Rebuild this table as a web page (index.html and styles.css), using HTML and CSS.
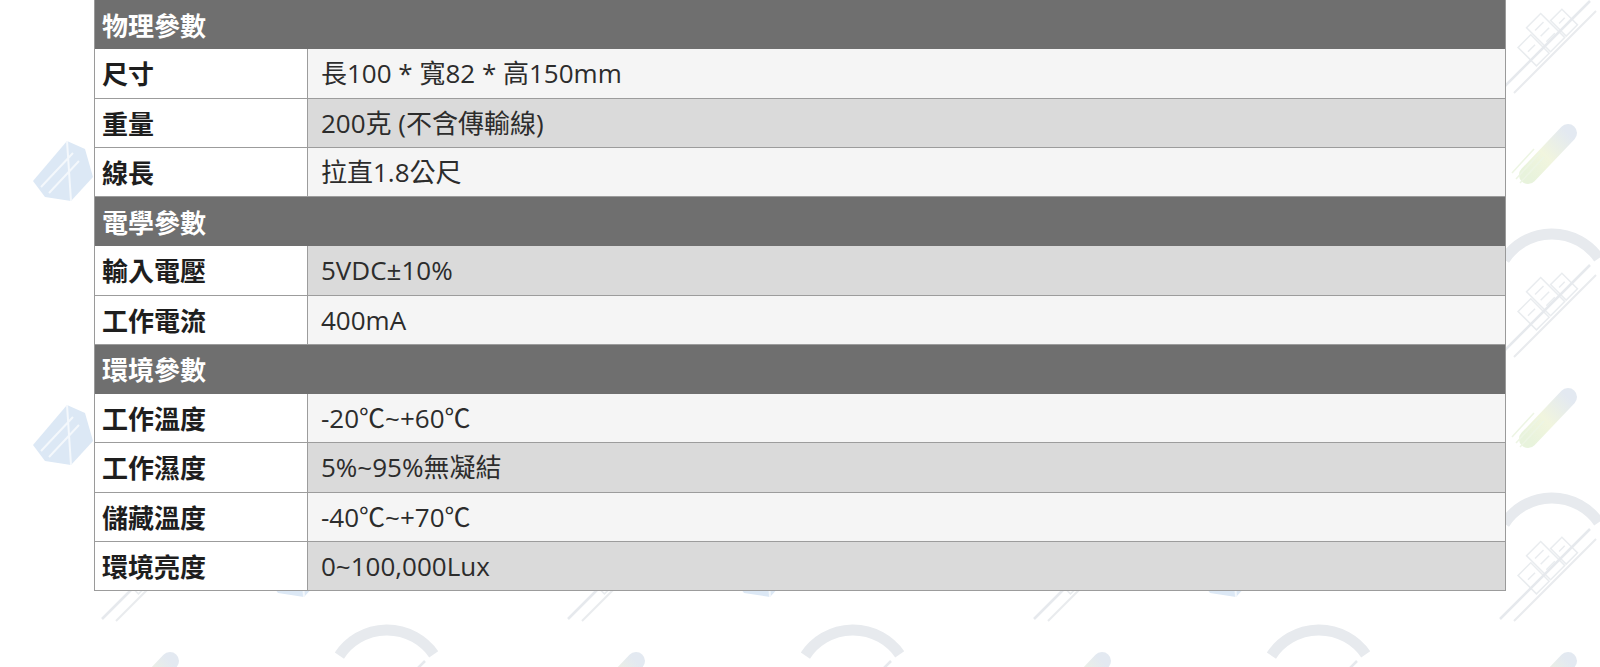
FILE: index.html
```html
<!DOCTYPE html>
<html lang="zh-Hant">
<head>
<meta charset="utf-8">
<title>產品規格</title>
<link rel="stylesheet" href="styles.css">
</head>
<body>
<div class="page">
  <svg class="watermark" width="1600" height="667" viewBox="0 0 1600 667" aria-hidden="true">
    <defs>
      <linearGradient id="scrollGrad" x1="0" y1="1" x2="1" y2="0">
        <stop offset="0" stop-color="#e8f3dc"/>
        <stop offset="0.45" stop-color="#f1f5de"/>
        <stop offset="1" stop-color="#e3e9f1"/>
      </linearGradient>
      <g id="mark">
        <!-- arc with building -->
        <path d="M -47.6 26.6 A 57 57 0 0 1 46.7 25.3" fill="none" stroke="#e7eaee" stroke-width="11"/>
        <g transform="rotate(-45 0 70)" fill="none" stroke="#e9ecef" stroke-width="1.5">
          <rect x="-30" y="52" width="18" height="26"/>
          <rect x="-10" y="44" width="20" height="34"/>
          <rect x="12" y="56" width="16" height="22"/>
          <line x1="-6" y1="52" x2="6" y2="52"/>
          <line x1="-6" y1="60" x2="6" y2="60"/>
          <line x1="-6" y1="68" x2="6" y2="68"/>
          <line x1="-26" y1="62" x2="-16" y2="62"/>
          <line x1="16" y1="64" x2="24" y2="64"/>
        </g>
        <line x1="-52" y1="122" x2="38" y2="32" stroke="#e6e9ed" stroke-width="2.5"/>
        <line x1="-38" y1="124" x2="44" y2="42" stroke="#e9ebee" stroke-width="2"/>
        <!-- scroll / pen -->
        <line x1="-24" y1="-58" x2="16" y2="-100" stroke="url(#scrollGrad)" stroke-width="18" stroke-linecap="round"/>
        <g stroke="#edf5e4" stroke-width="1.5">
          <line x1="-40" y1="-60" x2="-18" y2="-84"/>
          <line x1="-36" y1="-54" x2="-12" y2="-80"/>
          <line x1="-32" y1="-50" x2="-8" y2="-76"/>
        </g>
        <!-- blue paper shape -->
        <g transform="translate(-91 -62)">
          <path d="M -30 10 L 4 -30 L 22 -22 L 30 6 L 8 30 L -18 26 Z" fill="#dce8f5"/>
          <path d="M -22 16 L 10 -18 M -14 22 L 16 -10 M 4 -30 L 8 30" stroke="#f4f8fc" stroke-width="2" fill="none"/>
        </g>
      </g>
    </defs>
    <use href="#mark" x="154" y="-31"/>
    <use href="#mark" x="620" y="-31"/>
    <use href="#mark" x="1086" y="-31"/>
    <use href="#mark" x="1552" y="-31"/>
    <use href="#mark" x="-79" y="101"/>
    <use href="#mark" x="387" y="101"/>
    <use href="#mark" x="853" y="101"/>
    <use href="#mark" x="1319" y="101"/>
    <use href="#mark" x="1785" y="101"/>
    <use href="#mark" x="154" y="233"/>
    <use href="#mark" x="620" y="233"/>
    <use href="#mark" x="1086" y="233"/>
    <use href="#mark" x="1552" y="233"/>
    <use href="#mark" x="-79" y="365"/>
    <use href="#mark" x="387" y="365"/>
    <use href="#mark" x="853" y="365"/>
    <use href="#mark" x="1319" y="365"/>
    <use href="#mark" x="1785" y="365"/>
    <use href="#mark" x="154" y="497"/>
    <use href="#mark" x="620" y="497"/>
    <use href="#mark" x="1086" y="497"/>
    <use href="#mark" x="1552" y="497"/>
    <use href="#mark" x="-79" y="629"/>
    <use href="#mark" x="387" y="629"/>
    <use href="#mark" x="853" y="629"/>
    <use href="#mark" x="1319" y="629"/>
    <use href="#mark" x="1785" y="629"/>
    <use href="#mark" x="154" y="761"/>
    <use href="#mark" x="620" y="761"/>
    <use href="#mark" x="1086" y="761"/>
    <use href="#mark" x="1552" y="761"/>
  </svg>

  <div class="content">
    <table class="spec">
      <colgroup>
        <col class="col-label">
        <col class="col-value">
      </colgroup>
      <tbody>
        <tr class="section"><th colspan="2">物理參數</th></tr>
        <tr class="light"><td class="label">尺寸</td><td class="value">長100 * 寬82 * 高150mm</td></tr>
        <tr class="dark"><td class="label">重量</td><td class="value">200克 (不含傳輸線)</td></tr>
        <tr class="light"><td class="label">線長</td><td class="value">拉直1.8公尺</td></tr>
        <tr class="section"><th colspan="2">電學參數</th></tr>
        <tr class="dark"><td class="label">輸入電壓</td><td class="value">5VDC±10%</td></tr>
        <tr class="light"><td class="label">工作電流</td><td class="value">400mA</td></tr>
        <tr class="section"><th colspan="2">環境參數</th></tr>
        <tr class="light"><td class="label">工作溫度</td><td class="value">-20℃~+60℃</td></tr>
        <tr class="dark"><td class="label">工作濕度</td><td class="value">5%~95%無凝結</td></tr>
        <tr class="light"><td class="label">儲藏溫度</td><td class="value">-40℃~+70℃</td></tr>
        <tr class="dark"><td class="label">環境亮度</td><td class="value">0~100,000Lux</td></tr>
      </tbody>
    </table>
  </div>
</div>
</body>
</html>
```

FILE: styles.css
```css
* {
  box-sizing: border-box;
}

html, body {
  margin: 0;
  padding: 0;
  background: #ffffff;
}

.page {
  position: relative;
  width: 1600px;
  height: 667px;
  overflow: hidden;
  font-family: "Open Sans", "Noto Sans CJK TC", sans-serif;
  color: #222222;
}

.watermark {
  position: absolute;
  left: 0;
  top: 0;
  z-index: 0;
}

.content {
  position: relative;
  z-index: 1;
  padding-left: 94px;
}

.spec {
  width: 1412px;
  table-layout: fixed;
  border-collapse: separate;
  border-spacing: 0;
  border-left: 1px solid #9a9a9a;
  border-right: 1px solid #9a9a9a;
}

.col-label {
  width: 212px;
}

.spec th,
.spec td {
  height: 49.25px;
  padding: 0;
  vertical-align: middle;
  white-space: nowrap;
  line-height: 1;
}

.spec .section th {
  background: #6f6f6f;
  color: #ffffff;
  text-align: left;
  font-weight: 700;
  font-size: 26px;
  padding-left: 7px;
  font-family: "Noto Sans CJK TC", sans-serif;
}

.spec td {
  border-bottom: 1px solid #9c9c9c;
}

.spec .label {
  background: #ffffff;
  font-weight: 700;
  font-size: 26px;
  padding-left: 7px;
  font-family: "Noto Sans CJK TC", sans-serif;
  color: #1e1e1e;
}

.spec .value {
  border-left: 1px solid #9c9c9c;
  font-size: 26px;
  padding-left: 13px;
  color: #2c2c2c;
}

.light .value {
  background: #f5f5f5;
}

.dark .value {
  background: #dadada;
}
```
